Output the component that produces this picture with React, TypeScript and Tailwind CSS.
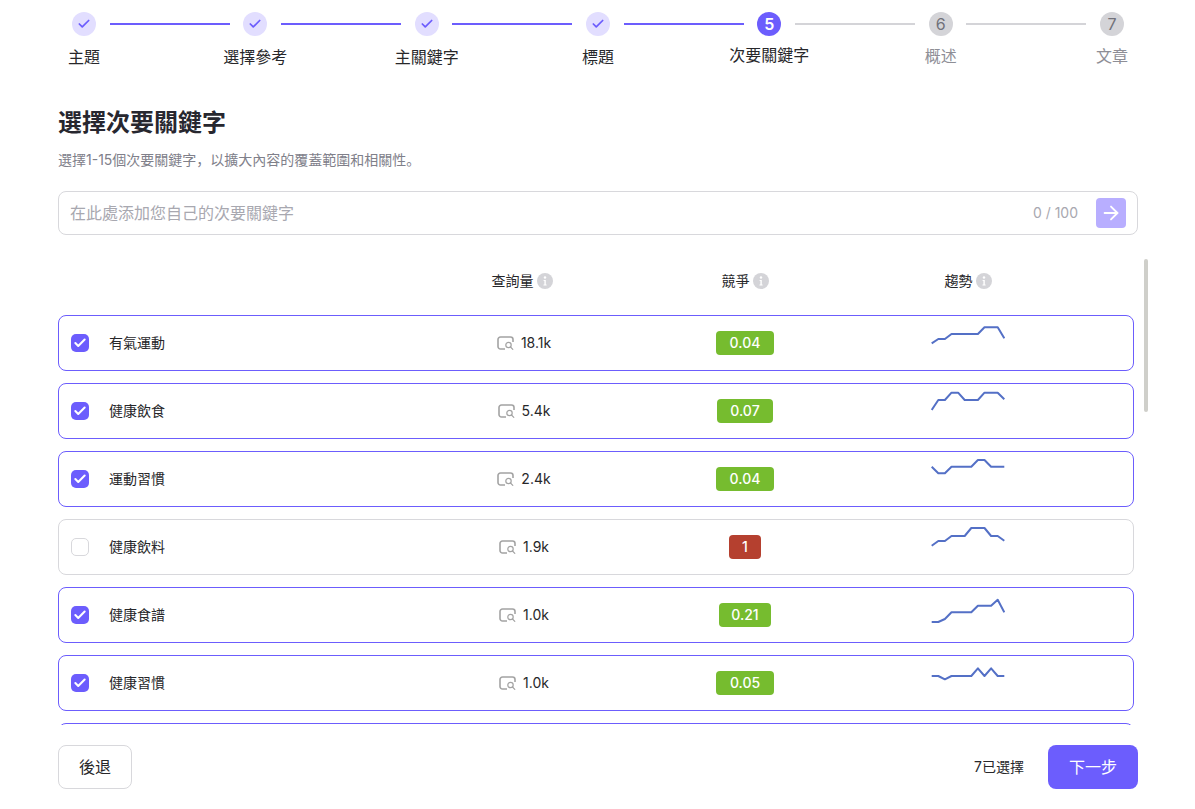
import { Check, ArrowRight } from 'lucide-react';

const steps = ['主題', '選擇參考', '主關鍵字', '標題', '次要關鍵字', '概述', '文章'];

const rows = [
  { name: '有氣運動', vol: '18.1k', comp: '0.04', w: 'w-[58px]', on: true, ys: [28.3, 24, 24, 19, 19, 19, 19, 19, 12.3, 12.3, 12.3, 23.3] },
  { name: '健康飲食', vol: '5.4k', comp: '0.07', w: 'w-[56px]', on: true, ys: [27, 17, 17, 9.7, 9.7, 17, 17, 17, 9.7, 9.7, 9.7, 16.3] },
  { name: '運動習慣', vol: '2.4k', comp: '0.04', w: 'w-[58px]', on: true, ys: [15.7, 22.3, 22.3, 15.7, 15.7, 15.7, 15.7, 9, 9, 15.7, 15.7, 15.7] },
  { name: '健康飲料', vol: '1.9k', comp: '1', w: 'w-[32px]', on: false, ys: [26.7, 22, 22, 17, 17, 17, 9, 9, 9, 17, 17, 21.7] },
  { name: '健康食譜', vol: '1.0k', comp: '0.21', w: 'w-[52px]', on: true, ys: [35, 35, 32, 25.3, 25.3, 25.3, 25.3, 18.7, 18.7, 18.7, 12.7, 25.3] },
  { name: '健康習慣', vol: '1.0k', comp: '0.05', w: 'w-[58px]', on: true, ys: [21, 21, 24.3, 21, 21, 21, 21, 13.3, 21, 13.3, 21, 21] },
];

const headers = [
  { label: '查詢量', cls: 'pr-0.5' },
  { label: '競爭', cls: '' },
  { label: '趨勢', cls: 'pl-0.5' },
];

function InfoIcon() {
  return (
    <svg width="16" height="16" viewBox="0 0 16 16" className="shrink-0">
      <circle cx="8" cy="8" r="8" fill="#d4d4d8" />
      <circle cx="8" cy="4.5" r="1.2" fill="#fff" />
      <path d="M6.6 7h2.2v4.4h.8v1H6.5v-1h.9V8h-.8z" fill="#fff" />
    </svg>
  );
}

function SearchBox() {
  return (
    <svg width="17" height="15" viewBox="0 0 17 15" fill="none" stroke="#a3a3a3" className="shrink-0">
      <path d="M16 6V3.500A2.500 2.500 0 0 0 13.500 1h-10A2.500 2.500 0 0 0 1 3.500v7A2.500 2.500 0 0 0 3.500 13H8" strokeWidth="1.600" />
      <circle cx="11.500" cy="9" r="2.700" strokeWidth="1.200" />
      <path d="M13.500 11l2.300 2.300" strokeWidth="1.200" strokeLinecap="round" />
    </svg>
  );
}

function Trend({ ys }: { ys: number[] }) {
  const pts = ys.map((y, i) => `${(0.7 + i * 6.6).toFixed(1)},${y}`).join(' ');
  return (
    <svg width="74" height="54" viewBox="0 1 74 54" fill="none" className="block">
      <polyline points={pts} stroke="#5470c6" strokeWidth="2" strokeLinejoin="round" />
    </svg>
  );
}

export default function App() {
  return (
    <div className="h-[809px] w-[1195px] overflow-hidden bg-white text-[#27272a] font-['Inter','Noto_Sans_CJK_SC',sans-serif]">
      <div className="mx-[72px] mt-3 flex h-[68px] w-[1052px] items-start justify-between">
        {steps.map((s, i) => (
          <div key={s} className="contents">
            <div className="flex w-6 flex-col items-center">
              {i < 4 ? (
                <div className="flex size-6 items-center justify-center rounded-full bg-[#e2deff]">
                  <Check size={14} strokeWidth={3} className="text-[#6c5dfd]" />
                </div>
              ) : (
                <div className={`flex size-6 items-center justify-center rounded-full text-base ${i === 4 ? 'bg-[#6c5dfd] font-semibold text-white' : 'bg-[#d4d4d8] text-[#71717a]'}`}>
                  {i + 1}
                </div>
              )}
              <div className={`mt-[9px] whitespace-nowrap text-base leading-6 ${i > 4 ? '-translate-y-[1px] text-[#8e8e96]' : ''} ${i === 4 ? '-translate-y-[2px]' : ''}`}>{s}</div>
            </div>
            {i < 6 && <div className={`mx-[13.670px] mt-[11px] h-0.5 flex-1 ${i < 4 ? 'bg-[#6c5dfd]' : 'bg-[#d4d4d8]'}`} />}
          </div>
        ))}
      </div>

      <div className="mx-[58px] w-[1080px]">
        <h1 className="mt-[27px] text-2xl leading-8 font-bold text-[#27272f]">選擇次要關鍵字</h1>
        <p className="mt-[11px] text-sm leading-5 text-[#80808a]">選擇1-15個次要關鍵字，以擴大內容的覆蓋範圍和相關性。</p>

        <div className="mt-[21px] flex h-11 items-center rounded-lg border border-[#d8d8dc] px-[11px]">
          <span className="flex-1 text-base text-[#a8a8b0]">在此處添加您自己的次要關鍵字</span>
          <span className="mr-[18px] text-sm text-[#a8a8b0]">0 / 100</span>
          <div className="flex size-[30px] items-center justify-center rounded bg-[#b8aeff]">
            <ArrowRight size={22} strokeWidth={2} className="text-white" />
          </div>
        </div>

        <div className="relative mt-[15px] h-[475px]">
          <div className="h-full overflow-hidden">
            <div className="grid h-[65px] w-[1076px] grid-cols-[341px_222px_222px_222px_1fr] items-center px-[13px] pb-1 text-sm">
              <div />
              {headers.map(h => (
                <div key={h.label} className={`flex items-center justify-center gap-[3px] ${h.cls}`}>
                  {h.label}
                  <InfoIcon />
                </div>
              ))}
            </div>
            <div className="flex w-[1076px] flex-col gap-3">
              {rows.map(r => (
                <div key={r.name} className={`grid h-14 grid-cols-[341px_222px_222px_222px_1fr] items-center rounded-lg border px-3 text-sm ${r.on ? 'border-[#6c5dfd]' : 'border-[#d8d8dc]'}`}>
                  <div className="flex items-center gap-5">
                    {r.on ? (
                      <div className="flex size-[18px] items-center justify-center rounded-[5px] bg-[#6c5dfd]">
                        <Check size={14} strokeWidth={3.500} className="text-white" />
                      </div>
                    ) : (
                      <div className="size-[18px] rounded-[5px] border border-[#d8d8dc]" />
                    )}
                    <span>{r.name}</span>
                  </div>
                  <div className="flex items-center justify-center gap-[7px] pl-0.5">
                    <SearchBox />
                    {r.vol}
                  </div>
                  <div className="flex justify-center">
                    <span className={`flex h-6 items-center justify-center rounded font-medium text-white ${r.w} ${r.comp === '1' ? 'bg-[#b5402f]' : 'bg-[#76bc2f]'}`}>{r.comp}</span>
                  </div>
                  <div className="flex justify-center pl-0.5">
                    <Trend ys={r.ys} />
                  </div>
                </div>
              ))}
              <div className="h-14 rounded-lg border border-[#6c5dfd]" />
            </div>
          </div>
          <div className="absolute top-[9px] right-[-10px] h-[153px] w-1 rounded-full bg-[#cfcfca]" />
        </div>

        <div className="mt-5 flex items-center">
          <button className="h-11 w-[74px] rounded-lg border border-[#d8d8dc] text-base">後退</button>
          <span className="mr-6 ml-auto text-sm">7已選擇</span>
          <button className="h-11 w-[90px] rounded-lg bg-[#6c5dfd] text-base text-white">下一步</button>
        </div>
      </div>
    </div>
  );
}
